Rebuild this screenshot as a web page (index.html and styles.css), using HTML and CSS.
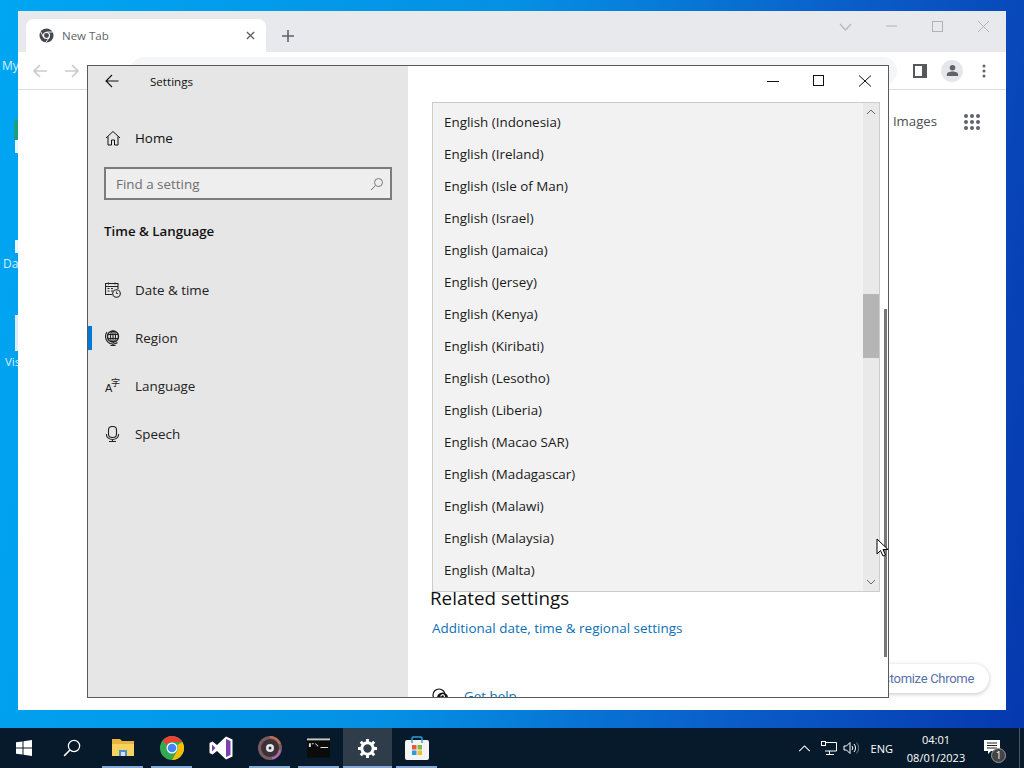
FILE: index.html
```html
<!DOCTYPE html>
<html lang="en">
<head>
<meta charset="utf-8">
<title>Settings</title>
<link rel="stylesheet" href="styles.css">
</head>
<body>
<div class="desktop">
  <div class="desk-label dl-my">My</div>
  <div class="desk-label dl-da">Da</div>
  <div class="desk-label dl-vis">Vis</div>
  <div class="sliver s-green"></div>
  <div class="sliver s-w1"></div>
  <div class="sliver s-w2"></div>
  <div class="sliver s-w3"></div>

  <section class="chrome">
    <div class="tabstrip">
      <div class="tab">
        <svg class="favicon" viewBox="0 0 16 16"><circle cx="8" cy="8" r="7.500" fill="#45494d"/><circle cx="8" cy="8" r="3.800" fill="#fff"/><circle cx="8" cy="8" r="2.600" fill="#45494d"/><path d="M8 4.300h6.600M4.900 10 1.900 4.300M10.900 10.200 7 15.600" stroke="#fff" stroke-width="1"/></svg>
        <span class="tab-title">New Tab</span>
        <svg class="tab-close" viewBox="0 0 10 10"><path d="M1 1l8 8M9 1l-8 8" stroke="#5f6368" stroke-width="1.500"/></svg>
      </div>
      <svg class="new-tab" viewBox="0 0 12 12"><path d="M6 0v12M0 6h12" stroke="#5f6368" stroke-width="1.600"/></svg>
      <div class="win-btns">
        <svg class="wb" viewBox="0 0 46 20"><path d="M0 5l5.500 6 5.500-6" transform="translate(18 3)" fill="none" stroke="#b4b6b9" stroke-width="1.200"/></svg>
        <svg class="wb" viewBox="0 0 46 20"><path d="M18 10h11" stroke="#b0b2b5"/></svg>
        <svg class="wb" viewBox="0 0 46 20"><rect x="18.500" y="5.500" width="10" height="10" fill="none" stroke="#b0b2b5"/></svg>
        <svg class="wb" viewBox="0 0 46 20"><path d="M18 5l11 11M29 5 18 16" stroke="#b0b2b5"/></svg>
      </div>
    </div>
    <div class="toolbar">
      <svg class="tool-arrow" viewBox="0 0 16 16"><path d="M15 8H2M8 2 2 8l6 6" fill="none" stroke="#c9cbce" stroke-width="1.700"/></svg>
      <svg class="tool-arrow" viewBox="0 0 16 16"><path d="M1 8h13M8 2l6 6-6 6" fill="none" stroke="#c9cbce" stroke-width="1.700"/></svg>
      <div class="omnibox"></div>
      <svg class="side-icon" viewBox="0 0 14 14"><rect width="14" height="14" fill="#55595d"/><rect x="2" y="2" width="7" height="10" fill="#fff"/></svg>
      <div class="avatar"><svg viewBox="0 0 14 14"><circle cx="7" cy="4" r="3" fill="#5f6368"/><path d="M1 13v-2c0-2 3-3 6-3s6 1 6 3v2z" fill="#5f6368"/></svg></div>
      <svg class="kebab" viewBox="0 0 4 14"><circle cx="2" cy="2" r="1.500" fill="#5f6368"/><circle cx="2" cy="7" r="1.500" fill="#5f6368"/><circle cx="2" cy="12" r="1.500" fill="#5f6368"/></svg>
    </div>
    <div class="ntp">
      <div class="ntp-links">
        <span class="images">Images</span>
        <svg class="apps" viewBox="0 0 16 16"><g fill="#5f6368"><circle cx="2" cy="2" r="2"/><circle cx="8" cy="2" r="2"/><circle cx="14" cy="2" r="2"/><circle cx="2" cy="8" r="2"/><circle cx="8" cy="8" r="2"/><circle cx="14" cy="8" r="2"/><circle cx="2" cy="14" r="2"/><circle cx="8" cy="14" r="2"/><circle cx="14" cy="14" r="2"/></g></svg>
      </div>
      <div class="customize">Customize Chrome</div>
    </div>
  </section>

  <section class="settings">
    <aside class="side">
      <div class="side-head">
        <svg class="back" viewBox="0 0 14 14"><path d="M13.500 7H1M7 1 1 7l6 6" fill="none" stroke="#111" stroke-width="1.100"/></svg>
        <span class="side-title">Settings</span>
      </div>
      <div class="home">
        <svg class="nav-ic" viewBox="0 0 16 16"><path d="M1 8 8 1.500 15 8M3 6.500V15h3.500v-5h3v5H13V6.500" fill="none" stroke="#111" stroke-width="1"/></svg>
        <span>Home</span>
      </div>
      <div class="search">
        <span>Find a setting</span>
        <svg class="search-ic" viewBox="0 0 14 14"><circle cx="8.500" cy="5.500" r="4" fill="none" stroke="#777"/><path d="M5.500 8.500 1 13" stroke="#777"/></svg>
      </div>
      <h2 class="group">Time &amp; Language</h2>
      <nav class="nav">
        <div class="nav-item">
          <svg class="nav-ic" viewBox="0 0 16 16"><path d="M7 12.500H.5V1.500h12.500V7M.5 4.500H13M3.500 .5v2M10 .5v2" fill="none" stroke="#222" stroke-width="1.100"/><path d="M2.500 6.500h2M6 6.500h2M2.500 9h2M6 9h2" stroke="#222" stroke-width="1.200"/><circle cx="11.500" cy="11.500" r="3.800" fill="#e6e6e6" stroke="#222" stroke-width="1.100"/><path d="M11.500 9.500v2h1.500" fill="none" stroke="#222" stroke-width=".9"/></svg>
          <span>Date &amp; time</span>
        </div>
        <div class="nav-item active">
          <svg class="nav-ic" viewBox="0 0 16 16"><circle cx="8" cy="6.500" r="5.500" fill="none" stroke="#222" stroke-width="1.400"/><ellipse cx="8" cy="6.500" rx="2.500" ry="5.500" fill="none" stroke="#222" stroke-width="1.100"/><path d="M2.500 4.500h11M2.500 8.500h11M8 1v11" stroke="#222" stroke-width="1.100"/><path d="M2 2a7.500 7.500 0 0 0 10.500 10.500M8 14v1.500M5.500 15.500h5" fill="none" stroke="#222" stroke-width="1.100"/></svg>
          <span>Region</span>
        </div>
        <div class="nav-item">
          <span class="lang-ic"><span class="lang-a">A</span><span class="lang-z">字</span></span>
          <span>Language</span>
        </div>
        <div class="nav-item">
          <svg class="nav-ic" viewBox="0 0 16 16"><rect x="3.500" y=".5" width="8" height="11" rx="3.500" fill="none" stroke="#222" stroke-width="1.100"/><path d="M1.500 8v1a6 4.500 0 0 0 12 0V8M7.500 13.500v2M4 15.500h7" fill="none" stroke="#222" stroke-width="1.100"/></svg>
          <span>Speech</span>
        </div>
      </nav>
    </aside>
    <main class="main">
      <div class="titlebar">
        <svg class="sw" viewBox="0 0 46 16"><path d="M17 8.500h12" stroke="#111" stroke-width="1"/></svg>
        <svg class="sw" viewBox="0 0 46 16"><rect x="17.500" y="2.500" width="10" height="10" fill="none" stroke="#111"/></svg>
        <svg class="sw" viewBox="0 0 46 16"><path d="M17 2.500l12 11M29 2.500l-12 11" stroke="#111"/></svg>
      </div>
      <div class="content">
        <h3 class="related">Related settings</h3>
        <a class="link">Additional date, time &amp; regional settings</a>
        <div class="help">
          <svg class="help-ic" viewBox="0 0 16 16"><circle cx="7" cy="7" r="6" fill="none" stroke="#111" stroke-width="1.200"/><circle cx="10.500" cy="10" r="5.500" fill="#111"/><path d="M8.800 8.500a1.800 1.800 0 1 1 2.600 1.600c-.6.300-.9.700-.9 1.300" fill="none" stroke="#fff" stroke-width="1.100"/></svg>
          <a class="help-link">Get help</a>
        </div>
      </div>
      <div class="page-scroll"></div>
      <div class="dropdown">
        <ul class="list">
          <li>English (Indonesia)</li>
          <li>English (Ireland)</li>
          <li>English (Isle of Man)</li>
          <li>English (Israel)</li>
          <li>English (Jamaica)</li>
          <li>English (Jersey)</li>
          <li>English (Kenya)</li>
          <li>English (Kiribati)</li>
          <li>English (Lesotho)</li>
          <li>English (Liberia)</li>
          <li>English (Macao SAR)</li>
          <li>English (Madagascar)</li>
          <li>English (Malawi)</li>
          <li>English (Malaysia)</li>
          <li>English (Malta)</li>
        </ul>
        <div class="dd-scroll">
          <svg class="dd-arrow" viewBox="0 0 10 6"><path d="M1 5l4-4 4 4" fill="none" stroke="#666"/></svg>
          <div class="dd-track"><div class="dd-thumb"></div></div>
          <svg class="dd-arrow" viewBox="0 0 10 6"><path d="M1 1l4 4 4-4" fill="none" stroke="#666"/></svg>
        </div>
      </div>
    </main>
  </section>

  <svg class="cursor" viewBox="0 0 13 19"><path d="M1 1v15l3.500-3.500 2.500 5.500 2.500-1-2.500-5.500h5z" fill="#fff" stroke="#000"/></svg>
</div>

<footer class="taskbar">
  <div class="tb-start">
    <svg class="tb-ic16" viewBox="0 0 16 16"><path d="M0 2.300 6.500 1.400V7.500H0zM7.500 1.200 16 0V7.500H7.500zM0 8.500H6.500V14.600L0 13.700zM7.500 8.500H16V16L7.500 14.800z" fill="#fff"/></svg>
  </div>
  <div class="tb-btn w48">
    <svg class="tb-ic16 big" viewBox="0 0 16 16"><circle cx="9.800" cy="6.200" r="5" fill="none" stroke="#fff" stroke-width="1.100"/><path d="M6.200 9.800 1 15" stroke="#fff" stroke-width="1.300"/></svg>
  </div>
  <div class="tb-btn running">
    <svg class="tb-app" viewBox="0 0 22 20"><path d="M0 1h8l2 2h12v15H0z" fill="#e9b53f"/><path d="M0 6h22v12H0z" fill="#f6d35f"/><path d="M7 12h8v6H7z" fill="#4b8fd0"/><path d="M9 14h4v4H9z" fill="#cfe3f5"/></svg>
  </div>
  <div class="tb-btn running">
    <svg class="tb-app chrome-ic" viewBox="0 0 24 24"><circle cx="12" cy="12" r="12" fill="#34a853"/><path d="M12 0a12 12 0 0 1 10.400 6H12a6 6 0 0 0-5.200 3L2.700 4.500A12 12 0 0 1 12 0z" fill="#ea4335"/><path d="M22.400 6a12 12 0 0 1-10.400 18l5.200-9a6 6 0 0 0 0-6z" fill="#fbbc04"/><circle cx="12" cy="12" r="5.500" fill="#fff"/><circle cx="12" cy="12" r="4.300" fill="#4285f4"/></svg>
  </div>
  <div class="tb-btn">
    <svg class="tb-app chrome-ic" viewBox="0 0 24 24"><path d="M17 .5 23.500 3.500v17L17 23.500 8 15 3.500 18.500 .5 17V7L3.500 5.500 8 9z" fill="#fff"/><path d="M17 3 21.500 5v14L17 21z" fill="#7e3fb0"/><path d="M17 7.500v9L11.500 12z" fill="#fff"/><path d="M3 8.500 6.500 12 3 15.500z" fill="#7e3fb0"/></svg>
  </div>
  <div class="tb-btn running">
    <svg class="tb-app chrome-ic" viewBox="0 0 24 24"><circle cx="12" cy="12" r="12" fill="#7c5a60"/><circle cx="12" cy="12" r="9" fill="#3a3238"/><path d="M12 1a11 11 0 0 1 10 7" fill="none" stroke="#c9704a" stroke-width="2"/><path d="M22 14a11 11 0 0 1-8 8.500" fill="none" stroke="#b068b8" stroke-width="2"/><circle cx="12" cy="12" r="4" fill="#e8e8e8"/><circle cx="12" cy="12" r="1.500" fill="#333"/></svg>
  </div>
  <div class="tb-btn running">
    <svg class="tb-app cmd" viewBox="0 0 24 20"><rect width="24" height="20" fill="#0b0b0b"/><rect width="24" height="2" fill="#c8c8c8"/><path d="M2 5h2v4H2zM5 5h2v1H5zM9 5l3 3-.6.6-3-3zM14 9h8v1h-8z" fill="#ddd"/></svg>
  </div>
  <div class="tb-btn running current">
    <svg class="tb-app gear" viewBox="0 0 20 20"><circle cx="10" cy="10" r="6" fill="none" stroke="#fff" stroke-width="3.200"/><g stroke="#fff" stroke-width="3"><path d="M10 0v3.500M10 16.500V20M0 10h3.500M16.500 10H20M2.900 2.900l2.500 2.500M14.600 14.600l2.500 2.500M2.900 17.100l2.500-2.500M14.600 5.400l2.500-2.500"/></g></svg>
  </div>
  <div class="tb-btn running">
    <svg class="tb-app chrome-ic" viewBox="0 0 24 24"><rect y="4" width="24" height="20" rx="2" fill="#f4f4f4"/><path d="M7 7V2.500A1.500 1.500 0 0 1 8.500 1h7A1.500 1.500 0 0 1 17 2.500V7" fill="none" stroke="#2fa0d8" stroke-width="1.500"/><rect x="7" y="9" width="4.500" height="4.500" fill="#e8583a"/><rect x="12.500" y="9" width="4.500" height="4.500" fill="#7fba3a"/><rect x="7" y="14.500" width="4.500" height="4.500" fill="#2c9ad8"/><rect x="12.500" y="14.500" width="4.500" height="4.500" fill="#f5b82e"/></svg>
  </div>
  <div class="tb-spacer"></div>
  <div class="tray">
    <svg class="tray-chevron" viewBox="0 0 14 8"><path d="M1 7l6-6 6 6" fill="none" stroke="#fff" stroke-width="1.200"/></svg>
    <svg class="tray-net" viewBox="0 0 16 14"><path d="M4 1.500h11.500v8.500H4M8.500 10v3M5 13.500h8" fill="none" stroke="#fff"/><rect x=".5" y=".5" width="4" height="4" fill="#0a1a2a" stroke="#fff"/></svg>
    <svg class="tray-vol" viewBox="0 0 16 14"><path d="M1 5v4h2.500L7 12.500v-11L3.500 5z" fill="none" stroke="#fff"/><path d="M9 5a3 3 0 0 1 0 4M11 3a6 6 0 0 1 0 8" fill="none" stroke="#fff"/><path d="M13.500 1.500a8 8 0 0 1 0 11" fill="none" stroke="#777"/></svg>
    <span class="lang">ENG</span>
    <div class="clock"><span>04:01</span><span>08/01/2023</span></div>
    <div class="notif">
      <svg class="notif-ic" viewBox="0 0 16 15"><path d="M0 0h16v11H7l-3 3v-3H0z" fill="#fff"/><path d="M3 3h10M3 5.500h10M3 8h10" stroke="#222"/></svg>
      <span class="notif-badge">1</span>
    </div>
  </div>
</footer>
</body>
</html>
```

FILE: styles.css
```css
* { box-sizing: border-box; }
html, body { margin: 0; height: 100%; }
body {
  width: 1024px;
  height: 768px;
  overflow: hidden;
  display: flex;
  flex-direction: column;
  font-family: "Open Sans", "Noto Sans", "Liberation Sans", sans-serif;
  color: #111;
}
.desktop {
  position: relative;
  height: 728px;
  background: linear-gradient(100deg, #00a6f2 0%, #0590e4 45%, #0a5cc8 75%, #0638ae 100%);
}
.desk-label { position: absolute; left: 2px; font-size: 12px; line-height: 16px; color: #d4f0ff; white-space: nowrap; }
.dl-my { top: 58px; }
.dl-da { top: 256px; left: 3px; }
.dl-vis { top: 354px; left: 5px; font-size: 11.500px; }
.sliver { position: absolute; }
.s-green { left: 14px; top: 120px; width: 4px; height: 20px; background: #1aa07a; }
.s-w1 { left: 15px; top: 140px; width: 3px; height: 13px; background: #e8f6ff; }
.s-w2 { left: 15px; top: 240px; width: 3px; height: 13px; background: #e8f6ff; }
.s-w3 { left: 15px; top: 315px; width: 3px; height: 36px; background: #dcebf7; }

/* Chrome window */
.chrome {
  position: absolute;
  left: 18px; top: 11px;
  width: 988px; height: 699px;
  background: #fff;
  display: flex;
  flex-direction: column;
}
.tabstrip {
  height: 41px;
  background: #e7e9ec;
  display: flex;
  align-items: flex-end;
  padding-left: 8px;
}
.tab {
  width: 240px; height: 33px;
  background: #fff;
  border-radius: 8px 8px 0 0;
  display: flex;
  align-items: center;
  padding: 0 11px 0 13px;
}
.favicon { width: 15px; height: 15px; margin-right: 8px; }
.tab-title { flex: 1; font-size: 11.500px; color: #5f6368; }
.tab-close { width: 9px; height: 9px; }
.new-tab { width: 12px; height: 12px; margin: 0 0 10px 16px; }
.win-btns { margin-left: auto; display: flex; align-self: flex-start; margin-top: 5px; }
.wb { width: 46px; height: 20px; }
.toolbar {
  height: 38px;
  border-bottom: 1px solid #dadce0;
  display: flex;
  align-items: center;
  padding: 0 20px 0 14px;
}
.tool-arrow { width: 16px; height: 16px; margin-right: 16px; }
.omnibox { flex: 1; height: 28px; margin: 0 16px 0 34px; border-radius: 14px; background: #f5f6f7; }
.side-icon { width: 14px; height: 14px; }
.avatar { width: 22px; height: 22px; margin: 0 19px 0 14px; border-radius: 50%; background: #e4e6ea; display: flex; align-items: center; justify-content: center; }
.avatar svg { width: 13px; height: 13px; }
.kebab { width: 4px; height: 14px; }
.ntp { flex: 1; display: flex; flex-direction: column; align-items: flex-end; padding: 20px 17px 17px 0; }
.ntp-links { display: flex; align-items: center; gap: 27px; padding-right: 9px; height: 22px; }
.images { font-size: 13.200px; color: #4a4d51; }
.apps { width: 16px; height: 16px; position: relative; top: 1px; }
.customize {
  margin-top: auto;
  height: 29px;
  padding: 0 15px 0 16px;
  border-radius: 15px;
  background: #fff;
  box-shadow: 0 1px 4px rgba(60, 64, 67, .3);
  font-family: Roboto, sans-serif;
  font-size: 13px;
  letter-spacing: -.3px;
  line-height: 29px;
  color: #5a71a8;
}

/* Settings window */
.settings {
  position: absolute;
  left: 87px; top: 65px;
  width: 802px; height: 633px;
  border: 1px solid #5a5a5a;
  background: #fff;
  display: flex;
  overflow: hidden;
}
.side { width: 320px; background: #e6e6e6; flex: none; }
.side-head { height: 30px; display: flex; align-items: center; padding-left: 17px; }
.back { width: 14px; height: 14px; }
.side-title { font-size: 11.600px; margin-left: 31px; }
.home { height: 48px; margin-top: 18px; display: flex; align-items: center; padding-left: 17px; gap: 14px; font-size: 13.400px; }
.nav-ic { width: 16px; height: 16px; flex: none; }
.search {
  margin: 5px 16px 0;
  height: 33px;
  border: 2px solid #7c7c7c;
  background: #eee;
  display: flex;
  align-items: center;
  justify-content: space-between;
  padding: 0 6px 0 10px;
  font-size: 13.400px;
  color: #6f6f6f;
}
.search-ic { width: 14px; height: 14px; }
.group { margin: 20px 0 0 16px; font-size: 13.300px; line-height: 22px; font-weight: 600; }
.nav { margin-top: 24px; }
.nav-item { height: 48px; display: flex; align-items: center; padding-left: 17px; gap: 14px; font-size: 13.400px; color: #222; position: relative; }
.nav-item.active::before { content: ""; position: absolute; left: 0; top: 12px; width: 4px; height: 24px; background: #0078d7; }
.lang-ic { width: 16px; height: 16px; position: relative; flex: none; display: block; }
.lang-a { position: absolute; left: 0; top: 3px; font-size: 11px; line-height: 14px; font-family: "Liberation Sans", sans-serif; }
.lang-z { position: absolute; left: 6px; top: 0; font-size: 9px; line-height: 10px; font-family: "Noto Sans CJK SC", sans-serif; }
.main { flex: 1; position: relative; min-width: 0; }
.titlebar { height: 30px; display: flex; justify-content: flex-end; align-items: center; }
.sw { width: 46px; height: 16px; }
.content { padding: 490px 0 0 23px; }
.related { margin: 0 0 0 -1px; font-size: 18.800px; line-height: 24px; font-weight: 400; }
.link { display: block; margin: 8px 0 0 1px; font-size: 13.450px; line-height: 20px; color: #0b6fb8; }
.help { display: flex; align-items: center; gap: 16px; margin: 48px 0 0 1px; }
.help-ic { width: 16px; height: 16px; flex: none; }
.help-link { font-size: 13.400px; line-height: 20px; color: #0b6fb8; }
.page-scroll { position: absolute; left: 476px; top: 243px; width: 3px; height: 348px; background: #777; }
.dropdown {
  position: absolute;
  left: 24px; top: 36px;
  width: 448px; height: 490px;
  background: #f2f2f2;
  border: 1px solid #ccc;
  display: flex;
  overflow: hidden;
}
.list { list-style: none; margin: 0; padding: 3px 0 0; flex: 1; }
.list li { height: 32px; line-height: 32px; padding-left: 11px; font-size: 13.400px; color: #1a1a1a; }
.dd-scroll { width: 16px; background: #e9e9e9; display: flex; flex-direction: column; align-items: center; padding: 6px 0; }
.dd-arrow { width: 10px; height: 6px; flex: none; }
.dd-track { flex: 1; width: 100%; padding-top: 179px; }
.dd-thumb { height: 64px; background: #b5b5b5; }
.cursor { position: absolute; left: 876px; top: 538px; width: 13px; height: 19px; }

/* Taskbar */
.taskbar {
  height: 40px;
  background: #071a2c;
  display: flex;
  padding-right: 4px;
  color: #fff;
}
.tb-start { width: 48px; display: flex; align-items: center; justify-content: center; }
.tb-ic16 { width: 16px; height: 16px; }
.tb-ic16.big { width: 18px; height: 18px; }
.tb-btn { width: 49px; display: flex; align-items: center; justify-content: center; position: relative; }
.tb-btn.w48 { width: 48px; margin-right: 2px; }
.tb-btn.running::after { content: ""; position: absolute; left: 4px; right: 4px; bottom: 0; height: 2px; background: #84a9d6; }
.tb-btn.current { background: #2f3d4a; }
.tb-btn.current::after { left: 0; right: 0; }
.tb-app { width: 22px; height: 20px; }
.chrome-ic { width: 24px; height: 24px; }
.cmd { width: 23px; height: 20px; }
.gear { width: 19px; height: 19px; }
.tb-spacer { flex: 1; }
.tray { display: flex; align-items: center; padding-right: 11px; border-right: 1px solid #4a5560; }
.tray-chevron { width: 13px; height: 7px; margin-right: 10px; }
.tray-net { width: 16px; height: 14px; margin-right: 6px; }
.tray-vol { width: 16px; height: 14px; margin-right: 12px; }
.lang { font-size: 11px; margin-right: 14px; }
.clock { display: flex; flex-direction: column; align-items: center; font-size: 11px; line-height: 18px; width: 58px; margin-right: 19px; padding-top: 2px; }
.notif { position: relative; width: 24px; height: 24px; }
.notif-ic { position: absolute; left: 0; top: 4px; width: 16px; height: 15px; }
.notif-badge { position: absolute; left: 7px; top: 12px; width: 15px; height: 15px; border-radius: 50%; background: #444; border: 1px solid #999; font-size: 10px; line-height: 13px; text-align: center; }
```
